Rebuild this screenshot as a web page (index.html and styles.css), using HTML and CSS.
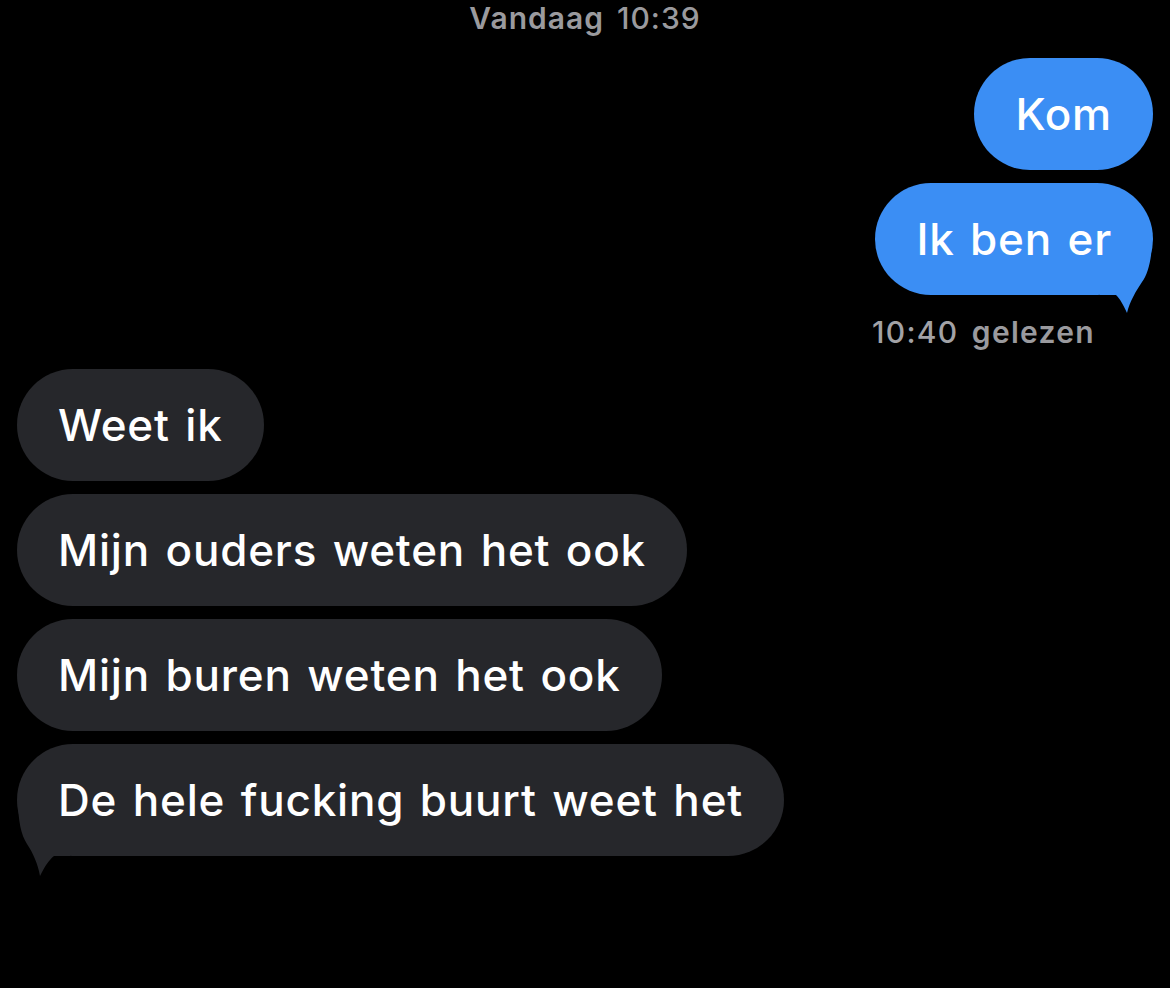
FILE: index.html
```html
<!DOCTYPE html>
<html lang="nl">
<head>
<meta charset="utf-8">
<link rel="stylesheet" href="styles.css">
</head>
<body>
<main class="thread">
  <div class="stamp"><span class="stamp-day">Vandaag</span> 10:39</div>
  <section class="group out">
    <div class="bubble blue">Kom</div>
    <div class="bubble blue tailed">Ik ben er
      <svg class="tail tail-right" width="53" height="76" viewBox="0 0 53 76"><path d="M0 0 L52 0 C52 20 48 35 42 43 C36 52 30 62 27 74 C23 65 20 60 16 56 L0 56 Z"/></svg>
    </div>
  </section>
  <div class="receipt">10:40 <b>gelezen</b></div>
  <section class="group in">
    <div class="bubble gray">Weet ik</div>
    <div class="bubble gray">Mijn ouders weten het ook</div>
    <div class="bubble gray">Mijn buren weten het ook</div>
    <div class="bubble gray tailed">De hele fucking buurt weet het
      <svg class="tail tail-left" width="53" height="78" viewBox="0 0 53 78"><path d="M53 0 L1 0 C1 20 4 35 10 44 C16 53 21 64 23 76 C28 66 32 60 37 56 L53 56 Z"/></svg>
    </div>
  </section>
</main>
</body>
</html>
```
FILE: styles.css
```css
html, body {
  margin: 0;
  padding: 0;
  background: #000;
}
body {
  width: 1170px;
  height: 988px;
  overflow: hidden;
  font-family: Inter, "Liberation Sans", Arial, sans-serif;
  color: #fff;
}
.thread {
  display: flex;
  flex-direction: column;
  padding: 0 17px;
}
.stamp {
  align-self: center;
  line-height: 36px;
  font-size: 30px;
  font-weight: 500;
  letter-spacing: 1px;
  word-spacing: 4px;
  color: #9a9a9e;
  margin-bottom: 22px;
}
.stamp-day { font-weight: 600; }
.group {
  display: flex;
  flex-direction: column;
  gap: 13px;
}
.group.out { align-items: flex-end; }
.group.in { align-items: flex-start; }
.bubble {
  position: relative;
  z-index: 0;
  font-size: 44px;
  font-weight: 500;
  letter-spacing: 0.8px;
  word-spacing: 3px;
  line-height: 52px;
  padding: 30px 41px;
  border-radius: 56px;
  white-space: nowrap;
}
.bubble.blue { background: #3b8ef4; }
.bubble.gray { background: #26272b; }
.tail {
  position: absolute;
  z-index: -1;
  display: block;
}
.tail-right {
  right: 0;
  top: 56px;
  fill: #3b8ef4;
}
.tail-left {
  left: 0;
  top: 56px;
  fill: #26272b;
}
.receipt {
  align-self: flex-end;
  margin-right: 58px;
  margin-top: 20px;
  margin-bottom: 20px;
  line-height: 34px;
  font-size: 30px;
  font-weight: 500;
  letter-spacing: 1.3px;
  word-spacing: 4px;
  color: #a2a2a6;
}
.receipt b { font-weight: 600; color: #9a9a9e; }
```
